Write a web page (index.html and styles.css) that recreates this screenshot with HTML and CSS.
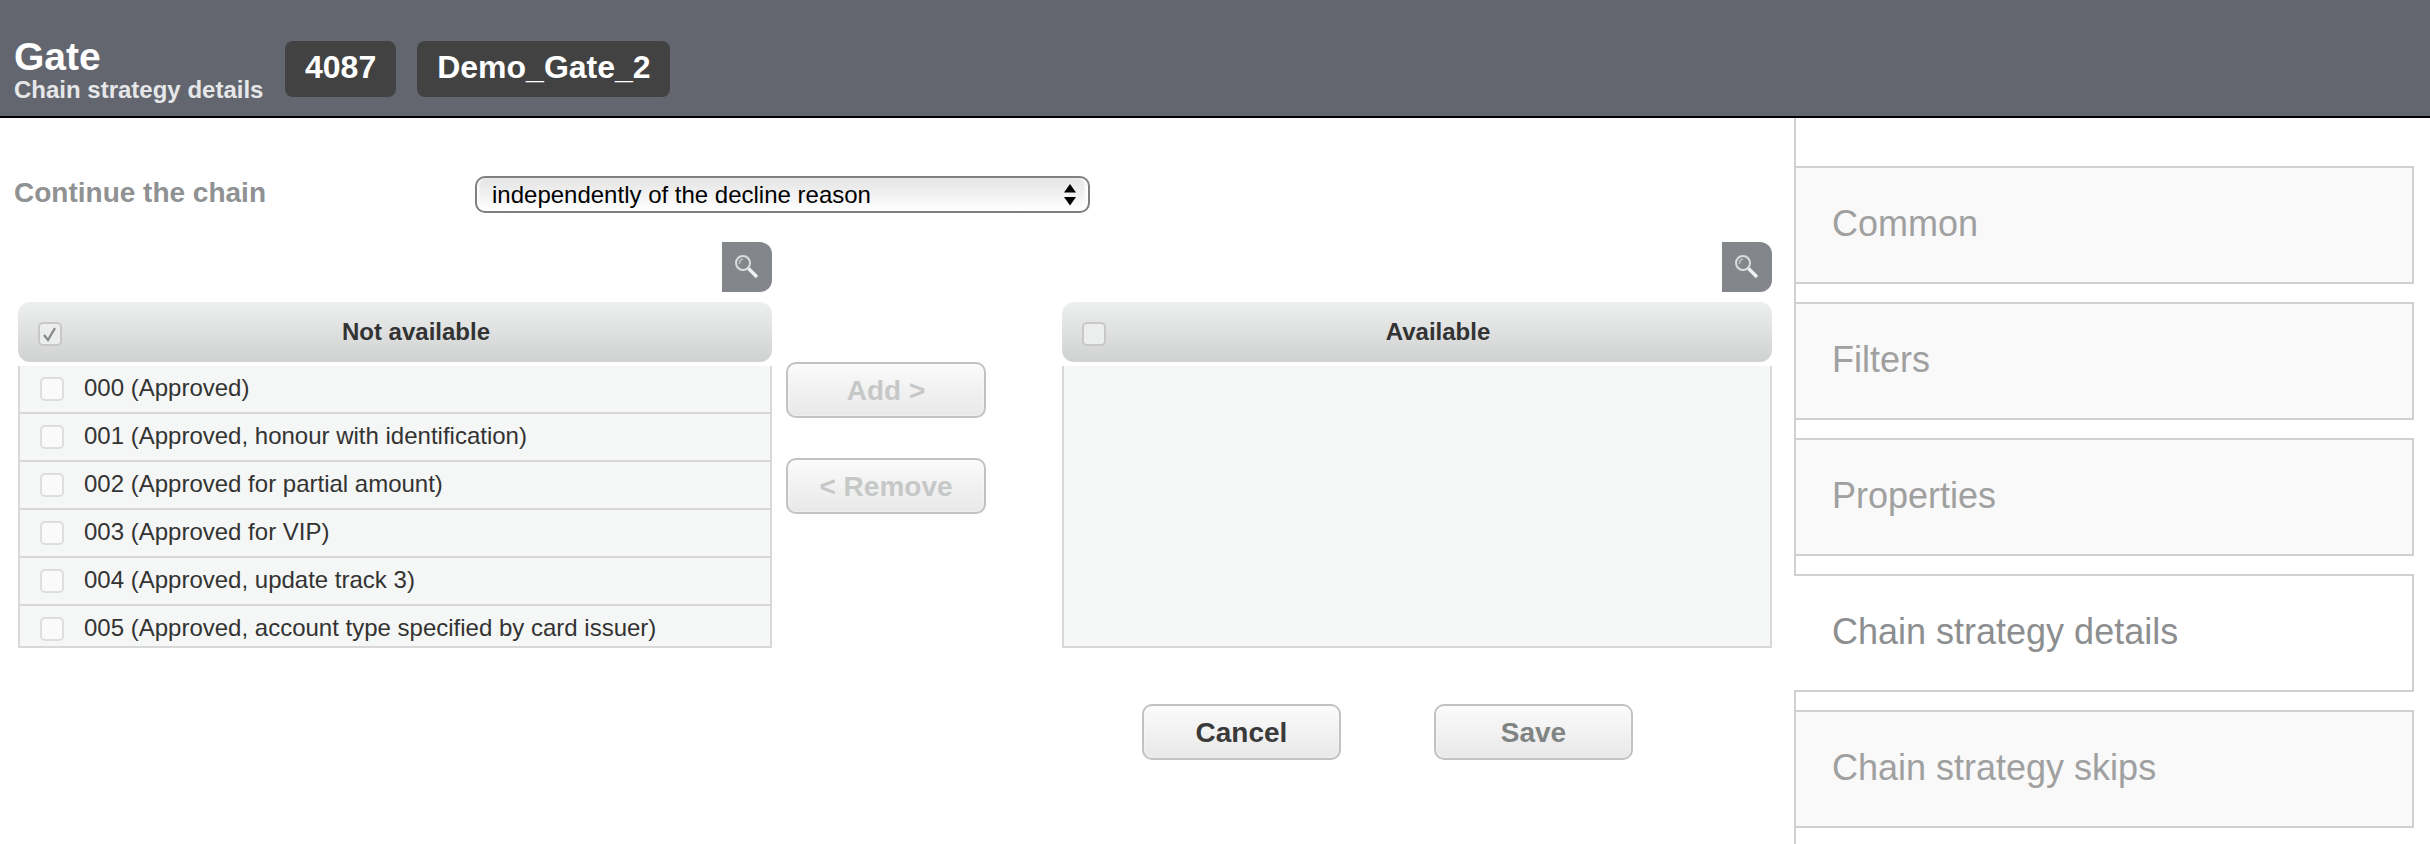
FILE: index.html
```html
<!DOCTYPE html>
<html lang="en">
<head>
<meta charset="utf-8">
<title>Gate</title>
<link rel="stylesheet" href="styles.css">
</head>
<body>
<header class="top">
  <div class="titles">
    <div class="title">Gate</div>
    <div class="subtitle">Chain strategy details</div>
  </div>
  <div class="badge">4087</div>
  <div class="badge badge-name">Demo_Gate_2</div>
</header>
<div class="page">
  <main class="main">
    <div class="field">
      <label class="field-label">Continue the chain</label>
      <div class="select-wrap">
        <select class="select"><option>independently of the decline reason</option></select>
        <svg class="select-arrows" width="12" height="22" viewBox="0 0 12 22"><path d="M6 0 L12 8.5 H0 Z M0 13 H12 L6 21.5 Z" fill="#000"/></svg>
      </div>
    </div>
    <div class="transfer">
      <section class="panel">
        <div class="search-row">
          <button class="search" type="button"><svg width="50" height="50" viewBox="0 0 50 50"><circle cx="21" cy="21" r="7" fill="none" stroke="#dcdcdc" stroke-width="2"/><path d="M17.5 22 A4.5 4.5 0 0 1 21 17" fill="none" stroke="#c4c6c8" stroke-width="1.4"/><path d="M26.5 26.5 L35 35" stroke="#f2f2f2" stroke-width="3.4"/></svg></button>
        </div>
        <div class="panel-head">
          <span class="check head-check"><svg width="20" height="20" viewBox="0 0 20 20"><path d="M4 11 L8 16 L15 4" fill="none" stroke="#8a8a8a" stroke-width="2.4"/></svg></span>
          <span class="panel-title">Not available</span>
        </div>
        <div class="list">
          <div class="row"><span class="check"></span>000 (Approved)</div>
          <div class="row"><span class="check"></span>001 (Approved, honour with identification)</div>
          <div class="row"><span class="check"></span>002 (Approved for partial amount)</div>
          <div class="row"><span class="check"></span>003 (Approved for VIP)</div>
          <div class="row"><span class="check"></span>004 (Approved, update track 3)</div>
          <div class="row"><span class="check"></span>005 (Approved, account type specified by card issuer)</div>
        </div>
      </section>
      <div class="moves">
        <button class="btn btn-move" type="button">Add &gt;</button>
        <button class="btn btn-move" type="button">&lt; Remove</button>
      </div>
      <section class="panel">
        <div class="search-row">
          <button class="search" type="button"><svg width="50" height="50" viewBox="0 0 50 50"><circle cx="21" cy="21" r="7" fill="none" stroke="#dcdcdc" stroke-width="2"/><path d="M17.5 22 A4.5 4.5 0 0 1 21 17" fill="none" stroke="#c4c6c8" stroke-width="1.4"/><path d="M26.5 26.5 L35 35" stroke="#f2f2f2" stroke-width="3.4"/></svg></button>
        </div>
        <div class="panel-head">
          <span class="check head-check"></span>
          <span class="panel-title">Available</span>
        </div>
        <div class="list"></div>
      </section>
    </div>
    <div class="actions">
      <button class="btn btn-action btn-cancel" type="button">Cancel</button>
      <button class="btn btn-action btn-save" type="button">Save</button>
    </div>
  </main>
  <nav class="side">
    <div class="tab">Common</div>
    <div class="tab">Filters</div>
    <div class="tab">Properties</div>
    <div class="tab tab-active">Chain strategy details</div>
    <div class="tab">Chain strategy skips</div>
  </nav>
</div>
</body>
</html>
```

FILE: styles.css
```css
* { box-sizing: border-box; }
html, body { margin: 0; height: 100%; overflow: hidden; background: #fff; }
body { font-family: "Liberation Sans", Arial, sans-serif; display: flex; flex-direction: column; height: 844px; }

.top { height: 118px; flex: none; background: #63666f; border-bottom: 2px solid #000; display: flex; align-items: flex-start; padding: 41px 0 0 14px; color: #fff; }
.titles { width: 271px; flex: none; margin-top: -4px; }
.title { font-size: 39px; font-weight: 700; line-height: 40px; }
.subtitle { font-size: 24px; font-weight: 700; line-height: 24px; color: #e6e7e8; margin-top: 1px; }
.badge { height: 56px; padding: 0 20px; margin-right: 21px; background: #424242; border-radius: 8px; font-size: 32px; font-weight: 700; line-height: 53px; }
.badge-name { padding-right: 19px; }

.page { flex: 1; display: flex; min-height: 0; }
.main { width: 1794px; flex: none; padding: 58px 22px 0 18px; }

.field { display: flex; align-items: center; height: 37px; }
.field-label { width: 461px; flex: none; margin-left: -4px; font-size: 28px; font-weight: 700; color: #8f9192; position: relative; top: -2px; }
.select-wrap { position: relative; width: 615px; height: 37px; }
.select { appearance: none; -webkit-appearance: none; width: 100%; height: 100%; padding: 0 0 0 15px; border: 2px solid #7f7f7f; border-radius: 10px; background: linear-gradient(#e4e4e4, #fff); box-shadow: inset 3px 0 3px -1px #fff, inset -4px 0 3px -1px #fff; font-family: "Liberation Sans", Arial, sans-serif; font-size: 24px; color: #000; }
.select-arrows { position: absolute; right: 14px; top: 8px; }

.transfer { display: grid; grid-template-columns: 754px 290px 710px; margin-top: 29px; }
.search-row { display: flex; justify-content: flex-end; height: 60px; }
.search { width: 50px; height: 50px; padding: 0; border: 0; background: #83868a; border-radius: 0 12px 12px 0; display: block; }
.search svg { display: block; }

.panel-head { height: 60px; display: flex; align-items: center; background: linear-gradient(#eef0f0, #d0d1d1); border-radius: 12px; padding-left: 20px; }
.panel-title { flex: 1; text-align: center; padding-right: 2px; font-size: 24px; font-weight: 700; color: #333; }

.check { display: inline-block; flex: none; width: 24px; height: 24px; margin-top: 2px; border: 2px solid #dedede; border-radius: 5px; background: #f9faf9; }
.head-check { margin-top: 4px; border-color: #c8c8c8; background: #eceeee; }
.head-check svg { display: block; }

.list { height: 282px; margin-top: 4px; background: #f5f7f6; border: 2px solid #d8d8d8; border-top: 0; overflow: hidden; }
.row { height: 48px; display: flex; align-items: center; gap: 20px; padding: 0 0 2px 20px; border-bottom: 2px solid #d8d8d8; font-size: 24px; color: #333; }

.moves { display: flex; flex-direction: column; gap: 40px; padding: 120px 0 0 14px; align-items: flex-start; }
.btn { font-family: "Liberation Sans", Arial, sans-serif; font-weight: 700; border: 2px solid #c2c2c2; border-radius: 10px; background: linear-gradient(#fbfbfb, #e8e8e8); box-shadow: inset 0 0 2px #fff; }
.btn-move { width: 200px; height: 56px; font-size: 28px; color: #c6c8c8; padding: 1px 0 0; }

.actions { display: flex; gap: 93px; margin: 56px 0 0 1124px; }
.btn-action { width: 199px; height: 56px; font-size: 28px; padding: 1px 0 0; }
.btn-cancel { color: #3a3a3a; }
.btn-save { color: #808483; }

.side { flex: 1; border-left: 2px solid #d0d0d0; padding: 48px 16px 0 0; display: flex; flex-direction: column; gap: 18px; }
.tab { flex: none; height: 118px; background: #f9f9f9; border: 2px solid #d0d0d0; border-left: 0; padding: 0 0 3px 36px; display: flex; align-items: center; font-size: 36px; color: #a0a0a0; }
.tab-active { background: #fff; color: #8c8e90; margin-left: -2px; padding-left: 38px; }
```
